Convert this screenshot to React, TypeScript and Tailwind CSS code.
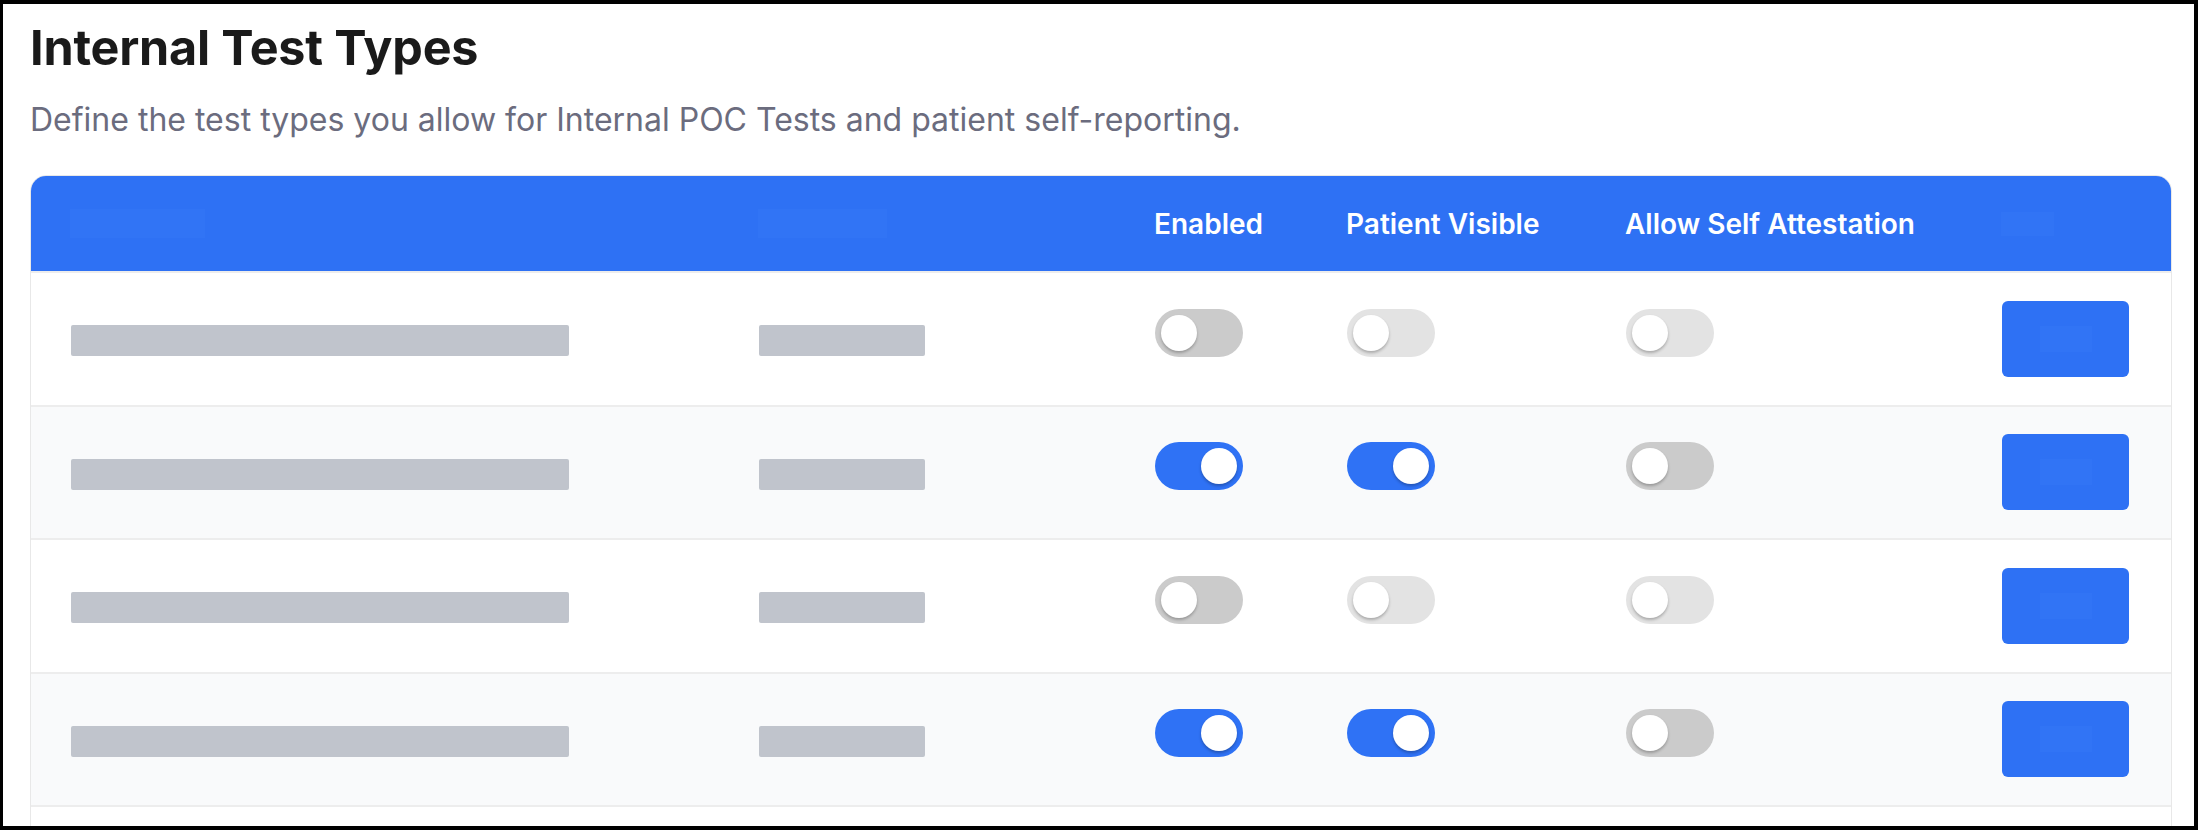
import React from 'react';

type Row = {
    enabled: boolean;
    patientVisible: boolean;
    selfAttest: boolean;
};

const rows: Row[] = [
    { enabled: false, patientVisible: false, selfAttest: false },
    { enabled: true, patientVisible: true, selfAttest: false },
    { enabled: false, patientVisible: false, selfAttest: false },
    { enabled: true, patientVisible: true, selfAttest: false },
    { enabled: false, patientVisible: false, selfAttest: false },
];

const Toggle: React.FC<{ on: boolean; disabled?: boolean }> = ({ on, disabled }) => {
    const track = on ? 'bg-[#2f72f5] justify-end' : disabled ? 'bg-[#e3e3e3] justify-start' : 'bg-[#cbcbcb] justify-start';
    return (
        <div className={`flex items-center w-[88px] h-[48px] rounded-full px-[6px] mb-[12px] ${track}`}>
            <div className="w-[36px] h-[36px] rounded-full bg-white shadow-[0_2px_3px_rgba(0,0,0,0.25)]" />
        </div>
    );
};

const App: React.FC = () => {
    return (
        <div
            className="h-[830px] overflow-hidden bg-white border-[4px] border-l-[3px] border-black pl-[27px] pr-[22px]"
            style={{ fontFamily: 'Inter, "Noto Sans", sans-serif' }}
        >
            {/* Page heading */}
            <h1 className="text-[48.5px] leading-[58px] font-bold text-[#1a1a1a] mt-[15px] tracking-[-0.2px]">
                Internal Test Types
            </h1>
            <p className="text-[32px] leading-[40px] text-[#6b6c7e] mt-[23px]">
                Define the test types you allow for Internal POC Tests and patient self-reporting.
            </p>

            {/* Table */}
            <div className="mt-[35px] border border-[#e8e8e8] rounded-t-[16px] overflow-hidden">
                <div className="grid grid-cols-[688px_396px_192px_279px_376px_1fr] items-center h-[95px] bg-[#2e71f4] pl-[39px] pr-[43px] text-white text-[28px] font-semibold">
                    <div className="w-[135px] h-[29px] bg-[#3174f5]" />
                    <div className="w-[129px] h-[29px] bg-[#3174f5]" />
                    <div>Enabled</div>
                    <div>Patient Visible</div>
                    <div>Allow Self Attestation</div>
                    <div className="w-[53px] h-[24px] bg-[#3174f5]" />
                </div>

                {rows.map((row, i) => (
                    <div
                        key={i}
                        className={`grid grid-cols-[688px_396px_192px_279px_376px_1fr] items-center h-[133.5px] border-t-2 border-[#ededed] pl-[40px] pr-[43px] ${
                            i % 2 === 1 ? 'bg-[#f9fafb]' : 'bg-white'
                        }`}
                    >
                        <div className="w-[498px] h-[31px] bg-[#c0c4cc] rounded-[2px] mt-[4px]" />
                        <div className="w-[166px] h-[31px] bg-[#c0c4cc] rounded-[2px] mt-[4px]" />
                        <Toggle on={row.enabled} />
                        <Toggle on={row.patientVisible} disabled={!row.enabled} />
                        <Toggle on={row.selfAttest} disabled={!row.enabled} />
                        <button className="flex items-center justify-center w-[127px] h-[76px] rounded-[6px] bg-[#2e71f4]">
                            <span className="w-[52px] h-[26px] bg-[#3174f5]" />
                        </button>
                    </div>
                ))}
            </div>
        </div>
    );
};

export default App;
